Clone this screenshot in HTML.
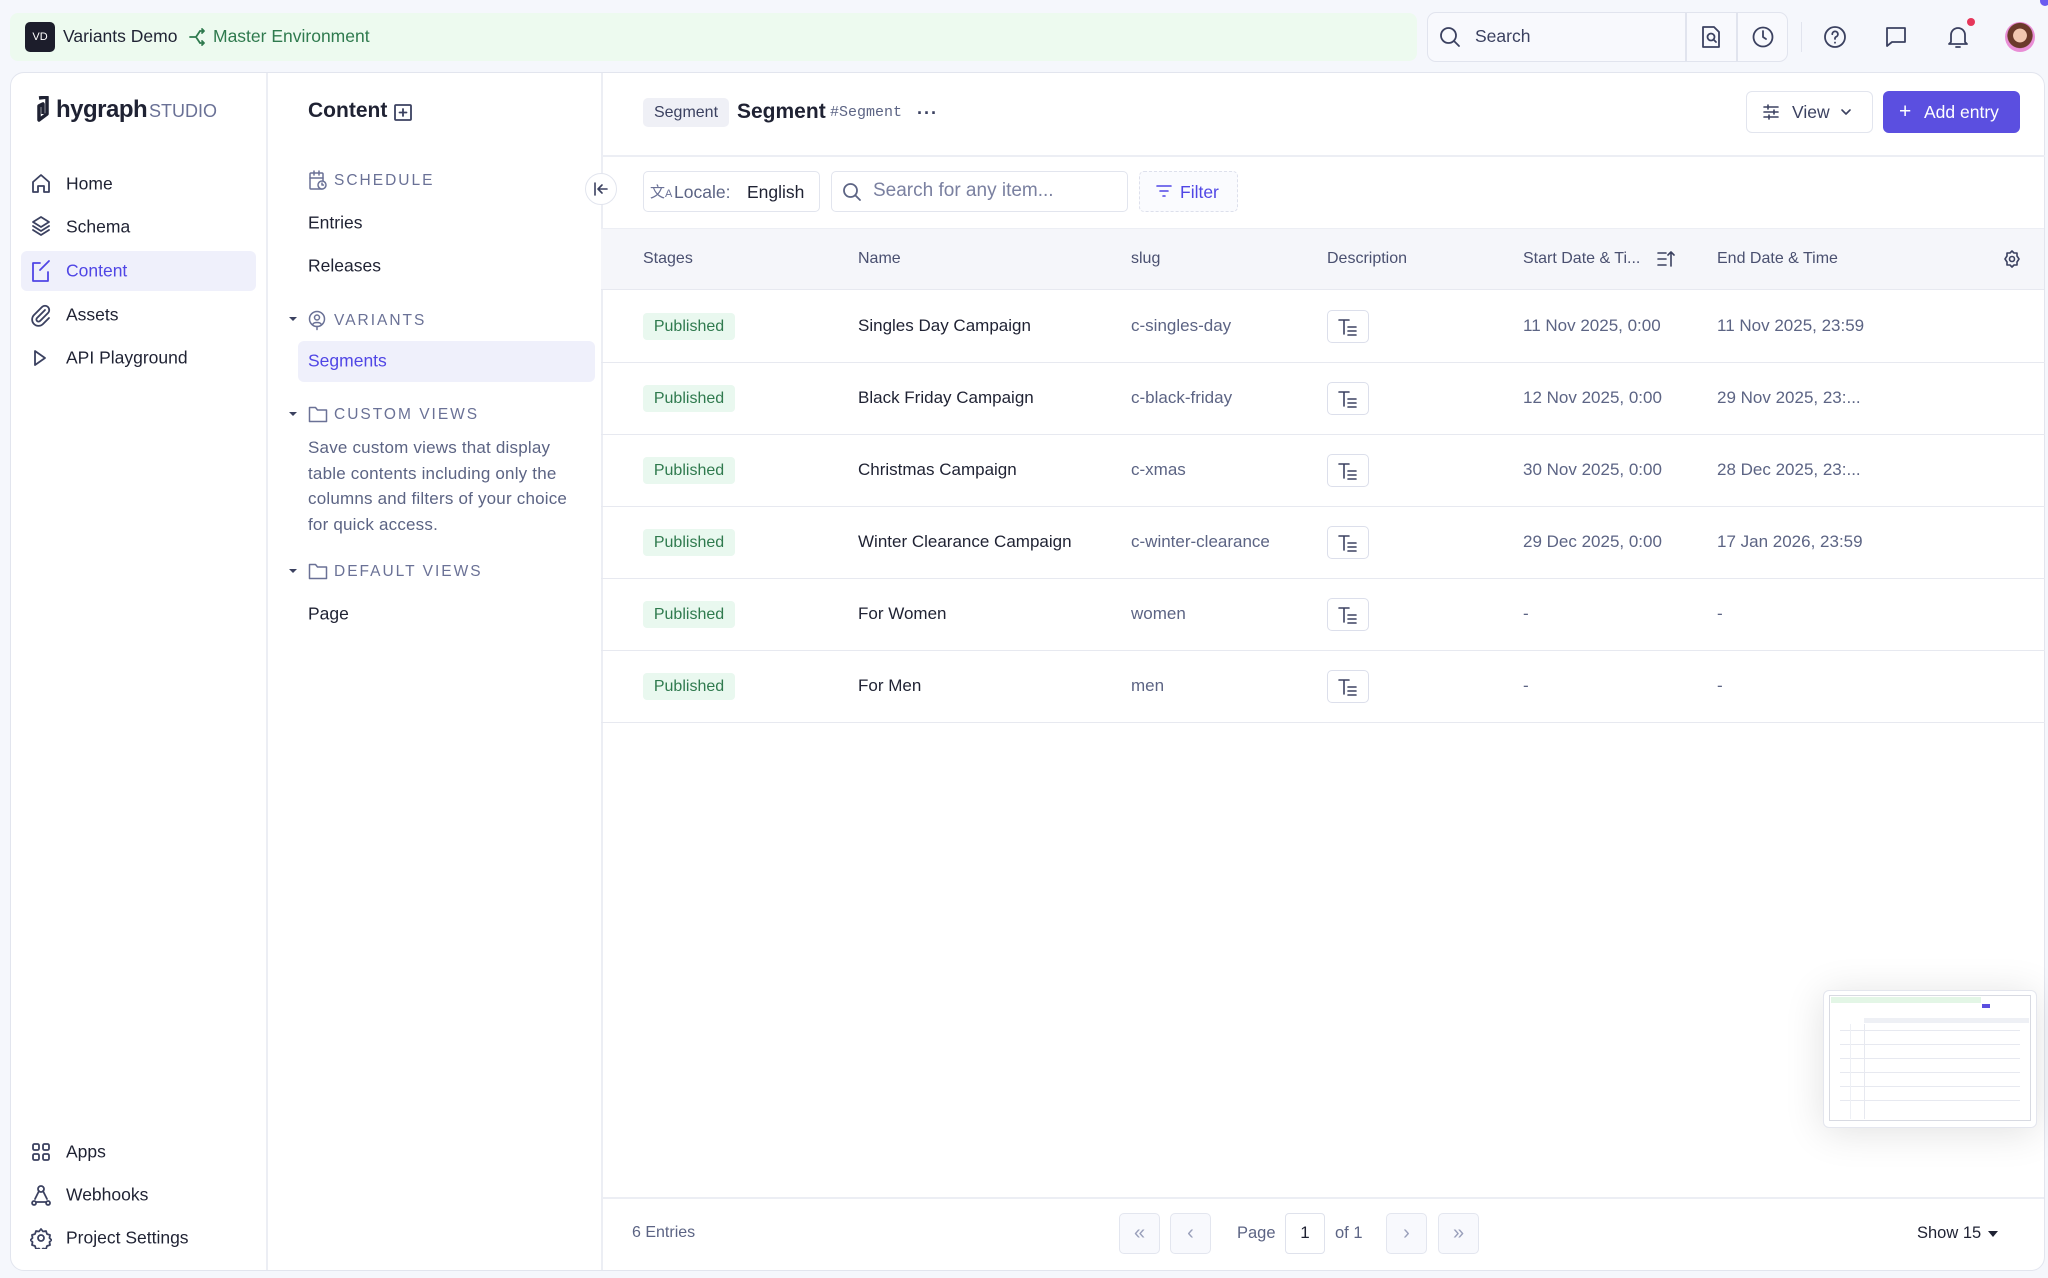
<!DOCTYPE html>
<html><head><meta charset="utf-8">
<style>
*{box-sizing:border-box;margin:0;padding:0}
body{width:2048px;height:1278px;background:#f5f7fc;font-family:"Liberation Sans",sans-serif;color:#1f2233;position:relative;overflow:hidden}
.a{position:absolute;white-space:nowrap}
svg{display:block}
.ic{position:absolute;fill:none;stroke:#3b4160;stroke-width:1.8;stroke-linecap:round;stroke-linejoin:round}
.nav{font-size:17.5px;color:#1f2233;transform:translateY(-50%)}
.sec{font-size:15.5px;letter-spacing:2px;color:#6a7196;transform:translateY(-50%)}
.th{font-size:16px;color:#4a5070;transform:translateY(-50%)}
.td{font-size:17px;transform:translateY(-50%)}
.pub{position:absolute;left:643px;width:92px;height:27px;background:#e9f8ef;border-radius:4px;color:#2f7a4e;font-size:16px;line-height:27px;text-align:center}
.desc{position:absolute;left:1327px;width:42px;height:33px;border:1.5px solid #dcdfeb;border-radius:5px;background:#fff}
.rowline{position:absolute;left:601px;right:3px;height:1px;background:#e7e9f0}
.pb{position:absolute;top:1213px;width:41px;height:41px;border:1px solid #e3e6ef;border-radius:5px;background:#f8f9fd;color:#9aa0bb;font-size:20px;text-align:center;line-height:38px}
</style></head><body>

<!-- top bar -->
<div class="a" style="left:10px;top:13px;width:1407px;height:48px;background:#edfaef;border-radius:8px"></div>
<div class="a" style="left:25px;top:22px;width:30px;height:30px;background:#1c1d2b;border-radius:5px;color:#fff;font-size:11px;text-align:center;line-height:30px">VD</div>
<div class="a" style="left:63px;top:26px;font-size:17.5px;color:#1f2233">Variants Demo</div>
<svg class="ic" style="left:188px;top:27px;stroke:#2f7a4e" width="20" height="20" viewBox="0 0 20 20"><path d="M2 10h6l4-6M8 10l4 6M12 4h4M12 16h4M14 2l2 2-2 2M14 14l2 2-2 2"/></svg>
<div class="a" style="left:213px;top:26px;font-size:17.5px;color:#2f7a4e">Master Environment</div>

<div class="a" style="left:1427px;top:12px;width:361px;height:50px;border:1.5px solid #e1e4ee;border-radius:9px;background:#f8f9fd"></div>
<div class="a" style="left:1685px;top:13px;width:1.5px;height:48px;background:#e1e4ee"></div>
<div class="a" style="left:1736px;top:13px;width:1.5px;height:48px;background:#e1e4ee"></div>
<svg class="ic" style="left:1438px;top:25px" width="24" height="24" viewBox="0 0 24 24"><circle cx="10.5" cy="10.5" r="7.5"/><path d="M16 16l5 5"/></svg>
<div class="a" style="left:1475px;top:26px;font-size:17.5px;color:#3b4160">Search</div>
<svg class="ic" style="left:1700px;top:25px" width="22" height="24" viewBox="0 0 22 24"><path d="M3 2h11l5 5v15H3z"/><circle cx="11" cy="12" r="3.5"/><path d="M13.5 14.5l2.5 2.5"/></svg>
<svg class="ic" style="left:1751px;top:25px" width="24" height="24" viewBox="0 0 24 24"><circle cx="12" cy="12" r="9.5"/><path d="M12 6v6l3 2"/></svg>
<div class="a" style="left:1801px;top:22px;width:1px;height:30px;background:#e1e4ee"></div>
<svg class="ic" style="left:1823px;top:25px" width="24" height="24" viewBox="0 0 24 24"><circle cx="12" cy="12" r="10"/><path d="M9.3 9.2a2.8 2.8 0 1 1 3.8 2.6c-.8.4-1.1.9-1.1 1.7V14"/><path d="M12 17.5v.3"/></svg>
<svg class="ic" style="left:1884px;top:25px" width="24" height="24" viewBox="0 0 24 24"><path d="M3 3h18v14H8l-5 4z"/></svg>
<svg class="ic" style="left:1946px;top:24px" width="24" height="26" viewBox="0 0 24 26"><path d="M5 18V11a7 7 0 0 1 14 0v7l2 2H3z"/><path d="M10 23h4"/></svg>
<div class="a" style="left:1967px;top:18px;width:8px;height:8px;border-radius:50%;background:#e6375a"></div>
<div class="a" style="left:2005px;top:22px;width:30px;height:30px;border-radius:50%;background:radial-gradient(circle at 50% 45%,#f3c7b0 0 30%,#6b3a2a 32% 55%,#e98ed6 58%)"></div>
<div class="a" style="left:2040px;top:-4px;width:10px;height:10px;border-radius:50%;background:#6a5cf0"></div>

<!-- main card -->
<div class="a" style="left:10px;top:72px;width:2035px;height:1199px;background:#fff;border:1.5px solid #e2e5ee;border-radius:14px"></div>
<div class="a" style="left:266px;top:73px;width:1.5px;height:1197px;background:#eceef4"></div>
<div class="a" style="left:601px;top:73px;width:1.5px;height:1197px;background:#eceef4"></div>

<!-- sidebar 1 -->
<svg class="a" style="left:33px;top:96px" width="18" height="30" viewBox="0 0 18 30"><path d="M6 2l8-1v17l-8 6V10l4-2v10" fill="none" stroke="#1f2233" stroke-width="3.5" stroke-linejoin="round"/></svg>
<div class="a" style="left:56px;top:96px;font-size:24px;font-weight:bold;color:#1f2233;letter-spacing:-0.5px">hygraph</div>
<div class="a" style="left:149px;top:101px;font-size:18px;color:#6a7196">STUDIO</div>

<div class="a" style="left:21px;top:251px;width:235px;height:40px;background:#eff0fb;border-radius:6px"></div>
<svg class="ic" style="left:30px;top:172px" width="22" height="22" viewBox="0 0 22 22"><path d="M3 10l8-7 8 7v10h-5v-6h-6v6H3z"/></svg>
<div class="a nav" style="left:66px;top:184px">Home</div>
<svg class="ic" style="left:30px;top:215px" width="22" height="24" viewBox="0 0 22 24"><path d="M11 2l8 5-8 5-8-5zM3 11l8 5 8-5M3 15l8 5 8-5"/></svg>
<div class="a nav" style="left:66px;top:227px">Schema</div>
<svg class="ic" style="left:30px;top:259px;stroke:#5046e5" width="22" height="24" viewBox="0 0 22 24"><path d="M10 4H3v18h15v-9M19 2L10 11"/></svg>
<div class="a nav" style="left:66px;top:271px;color:#5046e5">Content</div>
<svg class="ic" style="left:30px;top:303px" width="22" height="24" viewBox="0 0 22 24"><path d="M15 7l-8 8a2 2 0 0 0 3 3l8-8a4 4 0 0 0-6-6l-8 8a6 6 0 0 0 9 9l6-6"/></svg>
<div class="a nav" style="left:66px;top:315px">Assets</div>
<svg class="ic" style="left:32px;top:348px" width="16" height="20" viewBox="0 0 16 20"><path d="M3 3l10 7-10 7z"/></svg>
<div class="a nav" style="left:66px;top:358px">API Playground</div>

<svg class="ic" style="left:31px;top:1142px" width="20" height="20" viewBox="0 0 20 20"><rect x="2" y="2" width="6" height="6" rx="1.5"/><rect x="12" y="2" width="6" height="6" rx="1.5"/><rect x="2" y="12" width="6" height="6" rx="1.5"/><rect x="12" y="12" width="6" height="6" rx="1.5"/></svg>
<div class="a nav" style="left:66px;top:1152px">Apps</div>
<svg class="ic" style="left:30px;top:1184px" width="22" height="22" viewBox="0 0 22 22"><circle cx="11" cy="5" r="3"/><path d="M9 7l-4 8M13 7l4 8M4 17a2 2 0 1 0 0.1 0M18 17a2 2 0 1 0 .1 0M6 18h10"/></svg>
<div class="a nav" style="left:66px;top:1195px">Webhooks</div>
<svg class="ic" style="left:30px;top:1227px" width="22" height="22" viewBox="0 0 22 22"><circle cx="11" cy="11" r="3"/><path d="M11 2l2 2.5 3-.5 1 3 3 1-.5 3 2 2-2 2 .5 3-3 1-1 3-3-.5-2 2.5-2-2.5-3 .5-1-3-3-1 .5-3-2-2 2-2-.5-3 3-1 1-3 3 .5z"/></svg>
<div class="a nav" style="left:66px;top:1238px">Project Settings</div>

<!-- sidebar 2 -->
<div class="a" style="left:308px;top:99px;font-size:21px;font-weight:bold;color:#1f2233">Content</div>
<svg class="ic" style="left:393px;top:102px" width="20" height="20" viewBox="0 0 20 20"><rect x="2" y="3" width="16" height="15" rx="1"/><path d="M10 7v7M6.5 10.5h7"/></svg>
<svg class="ic" style="left:308px;top:170px;stroke:#6a7196;stroke-width:1.5" width="20" height="21" viewBox="0 0 20 21"><rect x="2" y="3" width="13" height="16" rx="1"/><path d="M6 1v4M11 1v4M2 8h13"/><circle cx="14" cy="15" r="4" fill="#fff"/><path d="M14 13v2h1.5"/></svg>
<div class="a sec" style="left:334px;top:181px">SCHEDULE</div>
<div class="a nav" style="left:308px;top:223px">Entries</div>
<div class="a nav" style="left:308px;top:266px">Releases</div>
<div class="a" style="left:289px;top:317px;border:4px solid transparent;border-top:4px solid #3b4160"></div>
<svg class="ic" style="left:308px;top:310px;stroke:#6a7196;stroke-width:1.5" width="18" height="21" viewBox="0 0 18 21"><circle cx="9" cy="9" r="7.5"/><circle cx="9" cy="7.5" r="2.5"/><path d="M5 14c1-2 7-2 8 0M9 16.5v3"/></svg>
<div class="a sec" style="left:334px;top:321px">VARIANTS</div>
<div class="a" style="left:298px;top:341px;width:297px;height:41px;background:#eff0fb;border-radius:6px"></div>
<div class="a nav" style="left:308px;top:361px;color:#5046e5">Segments</div>
<div class="a" style="left:289px;top:412px;border:4px solid transparent;border-top:4px solid #3b4160"></div>
<svg class="ic" style="left:308px;top:405px;stroke:#6a7196;stroke-width:1.5" width="20" height="18" viewBox="0 0 20 18"><path d="M1.5 2.5h6l2 2.5h9v11.5h-17z"/></svg>
<div class="a sec" style="left:334px;top:415px">CUSTOM VIEWS</div>
<div class="a" style="left:308px;top:435px;font-size:17px;line-height:25.6px;color:#5c6484;white-space:normal;width:268px;letter-spacing:0.2px">Save custom views that display table contents including only the columns and filters of your choice for quick access.</div>
<div class="a" style="left:289px;top:569px;border:4px solid transparent;border-top:4px solid #3b4160"></div>
<svg class="ic" style="left:308px;top:562px;stroke:#6a7196;stroke-width:1.5" width="20" height="18" viewBox="0 0 20 18"><path d="M1.5 2.5h6l2 2.5h9v11.5h-17z"/></svg>
<div class="a sec" style="left:334px;top:572px">DEFAULT VIEWS</div>
<div class="a nav" style="left:308px;top:614px">Page</div>

<div class="a" style="left:585px;top:173px;width:32px;height:32px;border-radius:50%;background:#fff;border:1.5px solid #e2e5ee"></div>
<svg class="ic" style="left:592px;top:181px;stroke-width:1.6" width="18" height="16" viewBox="0 0 18 16"><path d="M3 2v12M15 8H7M10 4L6 8l4 4"/></svg>

<!-- main header -->
<div class="a" style="left:643px;top:98px;width:86px;height:29px;background:#eff0f6;border-radius:5px;font-size:16px;line-height:29px;text-align:center;color:#3b4160">Segment</div>
<div class="a" style="left:737px;top:100px;font-size:21px;font-weight:bold">Segment</div>
<div class="a" style="left:830px;top:104px;font-size:15px;font-family:'Liberation Mono',monospace;color:#5c6484">#Segment</div>
<div class="a" style="left:917px;top:103px;font-size:18px;font-weight:bold;color:#3b4160;letter-spacing:1px">···</div>
<div class="a" style="left:1746px;top:91px;width:127px;height:42px;border:1.5px solid #e2e5ee;border-radius:6px;background:#fff"></div>
<svg class="ic" style="left:1762px;top:103px;stroke-width:1.6" width="18" height="18" viewBox="0 0 18 18"><path d="M2 4h14M2 9h14M2 14h14M6 2v4M12 7v4M7 12v4"/></svg>
<div class="a" style="left:1792px;top:102px;font-size:17.5px;color:#3b4160">View</div>
<svg class="ic" style="left:1840px;top:107px;stroke-width:1.6" width="12" height="10" viewBox="0 0 12 10"><path d="M2 3l4 4 4-4"/></svg>
<div class="a" style="left:1883px;top:91px;width:137px;height:42px;background:#5b4fe0;border-radius:6px"></div>
<div class="a" style="left:1899px;top:100px;font-size:21px;color:#fff">+</div>
<div class="a" style="left:1924px;top:102px;font-size:17.5px;color:#fff">Add entry</div>
<div class="a" style="left:601px;top:155px;width:1444px;height:1.5px;background:#eceef4"></div>

<!-- toolbar -->
<div class="a" style="left:643px;top:171px;width:177px;height:41px;border:1.5px solid #e2e5ee;border-radius:5px"></div>
<div class="a" style="left:650px;top:181px;font-size:15px;color:#6a7196">文<span style="font-size:11px">A</span></div>
<div class="a" style="left:674px;top:182px;font-size:17.5px;color:#5c6484">Locale:</div>
<div class="a" style="left:747px;top:182px;font-size:17.5px;color:#1f2233">English</div>
<div class="a" style="left:831px;top:171px;width:297px;height:41px;border:1.5px solid #e2e5ee;border-radius:5px"></div>
<svg class="ic" style="left:842px;top:182px;stroke:#5c6484" width="20" height="20" viewBox="0 0 20 20"><circle cx="8.5" cy="8.5" r="6.5"/><path d="M13.5 13.5l4.5 4.5"/></svg>
<div class="a" style="left:873px;top:180px;font-size:19px;color:#7a80a0">Search for any item...</div>
<div class="a" style="left:1139px;top:171px;width:99px;height:41px;border:1.5px dashed #dde0ec;border-radius:5px;background:#fafbfe"></div>
<svg class="ic" style="left:1156px;top:184px;stroke:#5046e5;stroke-width:1.6" width="16" height="14" viewBox="0 0 16 14"><path d="M1 2h14M4 7h8M7 12h2"/></svg>
<div class="a" style="left:1180px;top:182px;font-size:17.5px;color:#5046e5">Filter</div>

<!-- table -->
<div class="a" style="left:601px;top:228px;width:1443px;height:62px;background:#f5f6fa;border-top:1px solid #eceef4;border-bottom:1px solid #e7e9f0"></div>
<div class="a th" style="left:643px;top:259px">Stages</div>
<div class="a th" style="left:858px;top:259px">Name</div>
<div class="a th" style="left:1131px;top:259px">slug</div>
<div class="a th" style="left:1327px;top:259px">Description</div>
<div class="a th" style="left:1523px;top:259px">Start Date &amp; Ti...</div>
<svg class="ic" style="left:1656px;top:249px;stroke-width:1.6" width="20" height="20" viewBox="0 0 20 20"><path d="M2 4h8M2 10h8M2 16h8M15 17V3M12 6l3-3 3 3"/></svg>
<div class="a th" style="left:1717px;top:259px">End Date &amp; Time</div>
<svg class="ic" style="left:2002px;top:249px;stroke-width:1.6" width="20" height="20" viewBox="0 0 20 20"><circle cx="10" cy="10" r="2.5"/><path d="M10 2l2 2h3v3l2 3-2 3v3h-3l-2 2-2-2H5v-3l-2-3 2-3V4h3z"/></svg>

<!-- rows -->
<div class="pub" style="top:313px">Published</div>
<div class="a td" style="left:858px;top:326px">Singles Day Campaign</div>
<div class="a td" style="left:1131px;top:326px;color:#5c6484">c-singles-day</div>
<div class="desc" style="top:310px"></div>
<div class="a td" style="left:1523px;top:326px;color:#5c6484">11 Nov 2025, 0:00</div>
<div class="a td" style="left:1717px;top:326px;color:#5c6484">11 Nov 2025, 23:59</div>
<div class="rowline" style="top:362px"></div>

<div class="pub" style="top:385px">Published</div>
<div class="a td" style="left:858px;top:398px">Black Friday Campaign</div>
<div class="a td" style="left:1131px;top:398px;color:#5c6484">c-black-friday</div>
<div class="desc" style="top:382px"></div>
<div class="a td" style="left:1523px;top:398px;color:#5c6484">12 Nov 2025, 0:00</div>
<div class="a td" style="left:1717px;top:398px;color:#5c6484">29 Nov 2025, 23:...</div>
<div class="rowline" style="top:434px"></div>

<div class="pub" style="top:457px">Published</div>
<div class="a td" style="left:858px;top:470px">Christmas Campaign</div>
<div class="a td" style="left:1131px;top:470px;color:#5c6484">c-xmas</div>
<div class="desc" style="top:454px"></div>
<div class="a td" style="left:1523px;top:470px;color:#5c6484">30 Nov 2025, 0:00</div>
<div class="a td" style="left:1717px;top:470px;color:#5c6484">28 Dec 2025, 23:...</div>
<div class="rowline" style="top:506px"></div>

<div class="pub" style="top:529px">Published</div>
<div class="a td" style="left:858px;top:542px">Winter Clearance Campaign</div>
<div class="a td" style="left:1131px;top:542px;color:#5c6484">c-winter-clearance</div>
<div class="desc" style="top:526px"></div>
<div class="a td" style="left:1523px;top:542px;color:#5c6484">29 Dec 2025, 0:00</div>
<div class="a td" style="left:1717px;top:542px;color:#5c6484">17 Jan 2026, 23:59</div>
<div class="rowline" style="top:578px"></div>

<div class="pub" style="top:601px">Published</div>
<div class="a td" style="left:858px;top:614px">For Women</div>
<div class="a td" style="left:1131px;top:614px;color:#5c6484">women</div>
<div class="desc" style="top:598px"></div>
<div class="a td" style="left:1523px;top:614px;color:#5c6484">-</div>
<div class="a td" style="left:1717px;top:614px;color:#5c6484">-</div>
<div class="rowline" style="top:650px"></div>

<div class="pub" style="top:673px">Published</div>
<div class="a td" style="left:858px;top:686px">For Men</div>
<div class="a td" style="left:1131px;top:686px;color:#5c6484">men</div>
<div class="desc" style="top:670px"></div>
<div class="a td" style="left:1523px;top:686px;color:#5c6484">-</div>
<div class="a td" style="left:1717px;top:686px;color:#5c6484">-</div>
<div class="rowline" style="top:722px"></div>

<!-- desc icons -->
<svg class="ic" style="left:1337px;top:317px;stroke-width:1.6" width="22" height="20" viewBox="0 0 22 20"><path d="M2 3h10M7 3v14M11 10h8M11 14h8M11 18h8"/></svg>
<svg class="ic" style="left:1337px;top:389px;stroke-width:1.6" width="22" height="20" viewBox="0 0 22 20"><path d="M2 3h10M7 3v14M11 10h8M11 14h8M11 18h8"/></svg>
<svg class="ic" style="left:1337px;top:461px;stroke-width:1.6" width="22" height="20" viewBox="0 0 22 20"><path d="M2 3h10M7 3v14M11 10h8M11 14h8M11 18h8"/></svg>
<svg class="ic" style="left:1337px;top:533px;stroke-width:1.6" width="22" height="20" viewBox="0 0 22 20"><path d="M2 3h10M7 3v14M11 10h8M11 14h8M11 18h8"/></svg>
<svg class="ic" style="left:1337px;top:605px;stroke-width:1.6" width="22" height="20" viewBox="0 0 22 20"><path d="M2 3h10M7 3v14M11 10h8M11 14h8M11 18h8"/></svg>
<svg class="ic" style="left:1337px;top:677px;stroke-width:1.6" width="22" height="20" viewBox="0 0 22 20"><path d="M2 3h10M7 3v14M11 10h8M11 14h8M11 18h8"/></svg>

<!-- minimap -->
<div class="a" style="left:1823px;top:990px;width:214px;height:138px;background:#fff;border-radius:6px;box-shadow:0 4px 40px rgba(0,0,0,.12);border:1px solid #e4e6ee"></div>
<div class="a" style="left:1829px;top:995px;width:202px;height:126px;border:1px solid #d8dae2;background:#fff"></div>
<div class="a" style="left:1831px;top:997px;width:150px;height:6px;background:#e3f6e6"></div>
<div class="a" style="left:1982px;top:1004px;width:8px;height:4px;background:#5b4fe0"></div>
<div class="a" style="left:1864px;top:1018px;width:165px;height:5px;background:#eef0f5"></div>
<div class="a" style="left:1840px;top:1030px;width:180px;height:1px;background:#e7e9f0;box-shadow:0 14px 0 #e7e9f0,0 28px 0 #e7e9f0,0 42px 0 #e7e9f0,0 56px 0 #e7e9f0,0 70px 0 #e7e9f0"></div>
<div class="a" style="left:1864px;top:1024px;width:1px;height:95px;background:#e7e9f0"></div>
<div class="a" style="left:1850px;top:1024px;width:1px;height:95px;background:#eef0f5"></div>

<!-- footer -->
<div class="a" style="left:601px;top:1197px;width:1443px;height:1.5px;background:#eceef4"></div>
<div class="a" style="left:632px;top:1224px;font-size:16px;color:#5c6484">6 Entries</div>
<div class="pb" style="left:1119px">«</div>
<div class="pb" style="left:1170px">‹</div>
<div class="a" style="left:1237px;top:1224px;font-size:16.5px;color:#5c6484">Page</div>
<div class="a" style="left:1285px;top:1213px;width:40px;height:41px;border:1.5px solid #dfe2ec;border-radius:4px;font-size:17px;text-align:center;line-height:38px">1</div>
<div class="a" style="left:1335px;top:1224px;font-size:16.5px;color:#5c6484">of 1</div>
<div class="pb" style="left:1386px">›</div>
<div class="pb" style="left:1438px">»</div>
<div class="a" style="left:1917px;top:1224px;font-size:16.5px;color:#1f2233">Show 15</div>
<div class="a" style="left:1988px;top:1231px;border:5px solid transparent;border-top:6px solid #1f2233"></div>
</body></html>
